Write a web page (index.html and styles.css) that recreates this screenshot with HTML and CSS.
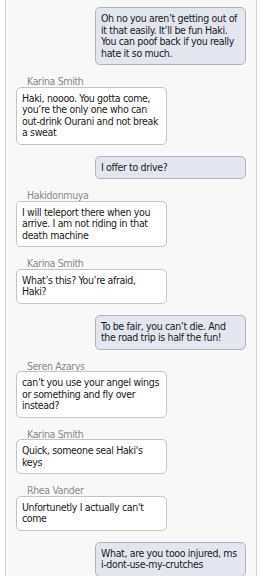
FILE: index.html
```html
<!doctype html>
<html>
<head>
<meta charset="utf-8">
<title>Chat</title>
<link rel="stylesheet" href="styles.css">
</head>
<body>
	<div id="chat" class="chat">
		<div class="msg mine">
			<div class="bubble">Oh no you aren’t getting out of it that easily. It’ll be fun Haki. You can poof back if you really hate it so much.</div>
		</div>
		<div class="msg">
			<div class="name">Karina Smith</div>
			<div class="bubble">Haki, noooo. You gotta come, you’re the only one who can out-drink Ourani and not break a sweat</div>
		</div>
		<div class="msg mine">
			<div class="bubble">I offer to drive?</div>
		</div>
		<div class="msg">
			<div class="name">Hakidonmuya</div>
			<div class="bubble">I will teleport there when you arrive. I am not riding in that death machine</div>
		</div>
		<div class="msg">
			<div class="name">Karina Smith</div>
			<div class="bubble">What’s this? You’re afraid, Haki?</div>
		</div>
		<div class="msg mine">
			<div class="bubble">To be fair, you can’t die. And the road trip is half the fun!</div>
		</div>
		<div class="msg">
			<div class="name">Seren Azarys</div>
			<div class="bubble">can’t you use your angel wings or something and fly over instead?</div>
		</div>
		<div class="msg">
			<div class="name">Karina Smith</div>
			<div class="bubble">Quick, someone seal Haki's keys</div>
		</div>
		<div class="msg">
			<div class="name">Rhea Vander</div>
			<div class="bubble">Unfortunetly I actually can't come</div>
		</div>
		<div class="msg mine">
			<div class="bubble">What, are you tooo injured, ms i-dont-use-my-crutches</div>
		</div>
	</div>
</body>
</html>
```

FILE: styles.css
```css
html, body {
	margin: 0;
	padding: 0;
	background-color: #ffffff;
}

.chat {
	margin: 0 4px 0 5px;
	padding: 7px 10px 20px 10px;
	min-height: 576px;
	box-sizing: border-box;
	border-left: 1px solid #d4d4d4;
	border-right: 1px solid #d4d4d4;
	background-color: #f8f8f8;
	display: flex;
	flex-direction: column;
	gap: 11px;
	font-family: "DejaVu Sans Condensed", "DejaVu Sans", sans-serif;
	font-size: 10.5px;
	letter-spacing: -0.35px;
	color: #1a1a1a;
}

.msg {
	display: flex;
	flex-direction: column;
	align-items: flex-start;
}

.mine {
	align-items: flex-end;
}

.name {
	padding-left: 11px;
	height: 10.5px;
	line-height: 10px;
	color: #8a8a8a;
}

.bubble {
	width: 151px;
	box-sizing: border-box;
	padding: 5px 4px 5px 5px;
	line-height: 11.5px;
	background-color: #ffffff;
	border: 1px solid #c4c4c4;
	border-radius: 5px;
}

.mine .bubble {
	background-color: #e3e6ef;
	border-color: #b0b4bf;
}
```
